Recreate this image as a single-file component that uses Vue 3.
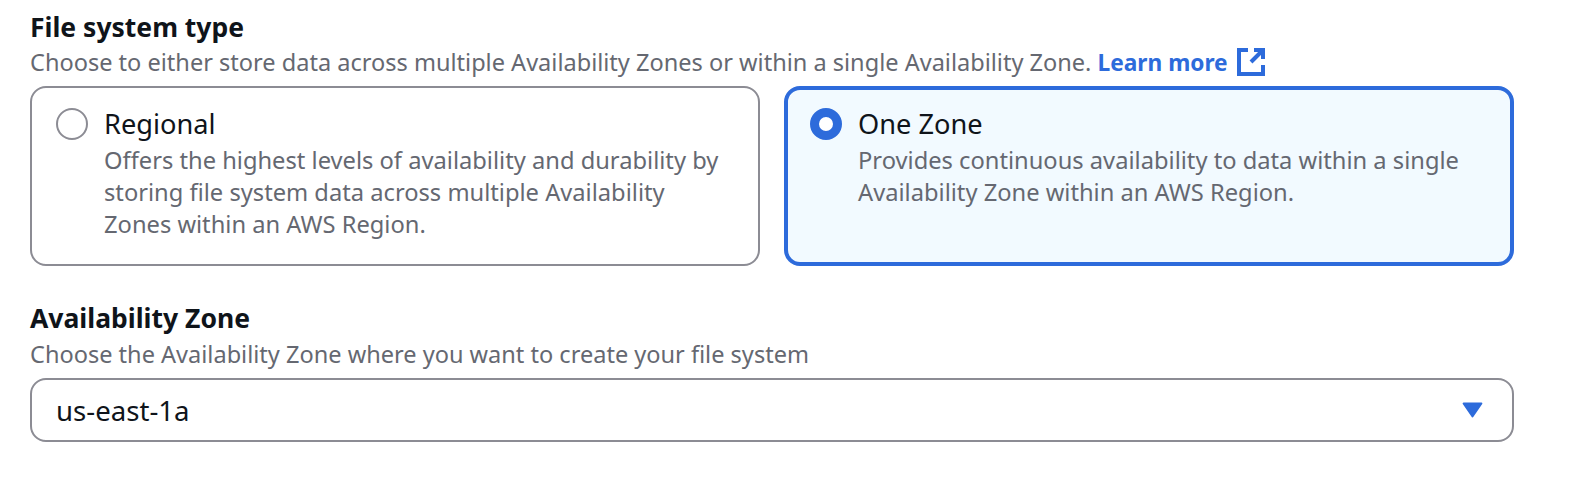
<script setup>
import { ref } from "vue"

const fileSystemType = ref("one-zone")

const options = [
    {
        value: "regional",
        title: "Regional",
        lines: [
            "Offers the highest levels of availability and durability by",
            "storing file system data across multiple Availability",
            "Zones within an AWS Region.",
        ],
    },
    {
        value: "one-zone",
        title: "One Zone",
        lines: [
            "Provides continuous availability to data within a single",
            "Availability Zone within an AWS Region.",
        ],
    },
]
</script>

<template>
    <div class="page">
        <!-- FILE SYSTEM TYPE -->
        <div class="label">File system type</div>
        <div class="hint">
            Choose to either store data across multiple Availability Zones or within a single Availability Zone.
            <a class="link">Learn more
                <svg class="ext" viewBox="0 0 28 28" width="28" height="28" fill="none" stroke="#2d6bdb" stroke-width="4">
                    <path d="M11 2H2V26H26V17" />
                    <path d="M17 2H26V11" />
                    <path d="M26 2L14 14" />
                </svg>
            </a>
        </div>

        <div class="tiles">
            <div
                v-for="opt in options"
                :key="opt.value"
                class="tile"
                :class="{ active: fileSystemType === opt.value }"
                @click="fileSystemType = opt.value"
            >
                <span class="radio"></span>
                <div class="tile-body">
                    <div class="tile-title">{{ opt.title }}</div>
                    <div class="tile-desc">
                        <div v-for="line in opt.lines" :key="line">{{ line }}</div>
                    </div>
                </div>
            </div>
        </div>

        <!-- AVAILABILITY ZONE -->
        <div class="label second">Availability Zone</div>
        <div class="hint sub">Choose the Availability Zone where you want to create your file system</div>

        <div class="select">
            <span>us-east-1a</span>
            <svg class="caret" viewBox="0 0 22 17" width="21" height="16">
                <path d="M1.5 1.5H20.5L11 15.5Z" fill="#2d6bdb" stroke="#2d6bdb" stroke-width="2" stroke-linejoin="round" />
            </svg>
        </div>
    </div>
</template>

<style scoped>
.page {
    width: 1576px;
    height: 478px;
    box-sizing: border-box;
    padding: 10px 62px 0 30px;
    background: #fff;
    font-family: "Noto Sans", sans-serif;
    color: #0f141a;
    overflow: hidden;
}

.label {
    font-size: 26.5px;
    line-height: 34px;
    font-weight: 700;
}

.label.second {
    margin-top: 35px;
}

.hint {
    font-size: 23.55px;
    line-height: 36px;
    color: #656871;
    white-space: nowrap;
}

.hint.sub {
    margin-top: 1px;
}

.link {
    color: #2d6bdb;
    font-size: 22.7px;
    font-weight: 700;
}

.ext {
    vertical-align: -5px;
    margin-left: 3px;
}

.tiles {
    display: grid;
    grid-template-columns: 1fr 1fr;
    gap: 24px;
    margin-top: 5px;
}

.tile {
    display: flex;
    gap: 16px;
    height: 180px;
    box-sizing: border-box;
    padding: 18px 24px;
    border: 2px solid #8c8c94;
    border-radius: 16px;
    cursor: pointer;
}

.tile.active {
    border: 4px solid #2d6bdb;
    padding: 16px 22px;
    background: #f2faff;
}

.radio {
    flex: none;
    width: 32px;
    height: 32px;
    margin-top: 2px;
    box-sizing: border-box;
    border: 2px solid #8c8c94;
    border-radius: 50%;
    background: #fff;
}

.active .radio {
    border: 9px solid #2d6bdb;
}

.tile-title {
    font-size: 27.2px;
    line-height: 36px;
}

.tile-desc {
    margin-top: 3px;
    font-size: 23.7px;
    line-height: 31.8px;
    color: #656871;
}

.select {
    display: flex;
    align-items: center;
    justify-content: space-between;
    height: 64px;
    box-sizing: border-box;
    margin-top: 6px;
    padding: 0 29px 0 24px;
    border: 2px solid #8c8c94;
    border-radius: 16px;
    font-size: 27.6px;
}
</style>
